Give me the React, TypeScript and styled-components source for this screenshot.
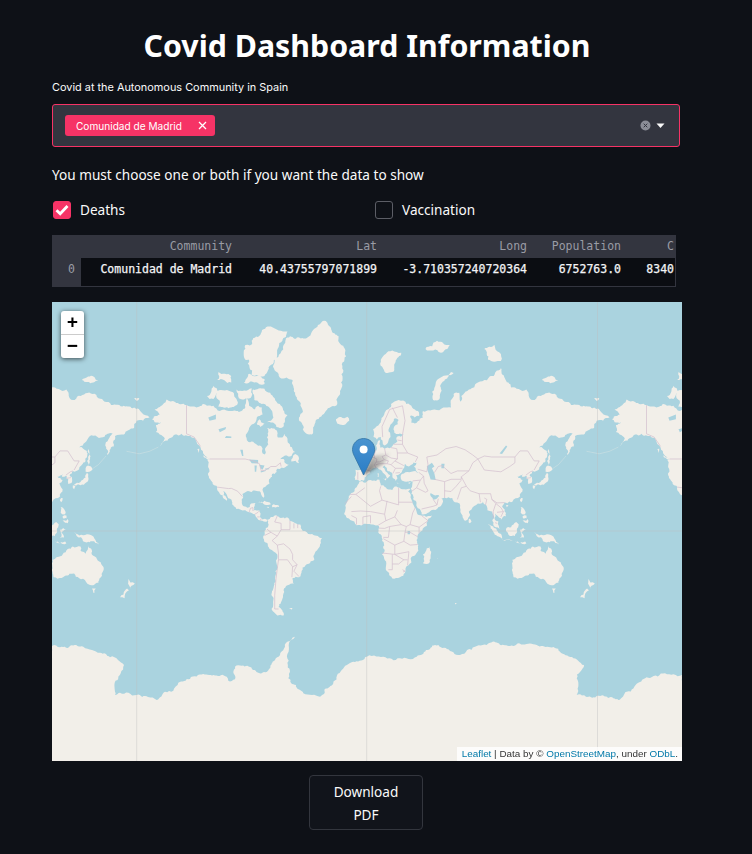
import React from "react";
import styled, { createGlobalStyle } from "styled-components";

const GlobalStyle = createGlobalStyle`
  html, body {
    margin: 0;
    padding: 0;
    background: #0e1117;
  }
  * {
    box-sizing: border-box;
  }
`;

/* ---- map data, lon/lat. web mercator at 460px per world ---- */
type Pts = number[][];

const project = ([lon, lat]: number[]) => [
  366.7 + (lon * 460) / 360,
  531 - 73.2 * Math.log(Math.tan(Math.PI / 4 + (lat * Math.PI) / 360)),
];

const toPath = (pts: number[][], closed = true) =>
  "M" + pts.map((p) => `${p[0].toFixed(1)} ${p[1].toFixed(1)}`).join("L") + (closed ? "Z" : "");

// coastlines are hand-typed and too straight, so break up long edges a bit
let seed = 7;
const noise = () => {
  seed = (seed * 16807) % 2147483647;
  return seed / 2147483647 - 0.5;
};
const roughEdge = (a: number[], b: number[], out: number[][]) => {
  const dx = b[0] - a[0];
  const dy = b[1] - a[1];
  const len = Math.hypot(dx, dy);
  if (len < 2.5) {
    out.push(b);
    return;
  }
  const amp = Math.min(len * 0.22, 1.8) * noise() * 2;
  const mid = [(a[0] + b[0]) / 2 - (dy / len) * amp, (a[1] + b[1]) / 2 + (dx / len) * amp];
  roughEdge(a, mid, out);
  roughEdge(mid, b, out);
};
const roughen = (pts: number[][]) => {
  const out: number[][] = [pts[0]];
  pts.forEach((p, i) => roughEdge(p, pts[(i + 1) % pts.length], out));
  return out;
};

const land: Pts[] = [
  // north america
  [[-168,65.5],[-164,66.5],[-162,67],[-166,68.5],[-163,69],[-156.5,71.2],[-150,70.5],[-141,69.7],[-135,69.3],[-128,70],[-125,69.5],[-120,69.5],[-115,68],[-108,68],[-102,68],[-98,68],[-95,69],[-94,71.5],[-92,69.5],[-88,68.5],[-85,69.5],[-82,69],[-81.5,67],[-86,66],[-87,64.5],[-92,62.5],[-94.5,60],[-94,58.7],[-92.5,57],[-88,56.5],[-85,55.3],[-82.3,55],[-82,52.9],[-80,51.3],[-79,52],[-79,54.5],[-77,56],[-78,58.8],[-77.5,60.5],[-78,62.4],[-73.5,62.3],[-70,61],[-69.5,58.8],[-66,58.8],[-64.5,60.3],[-62,57.5],[-60,55],[-56,52.5],[-60,50.2],[-65,50.2],[-69,48.3],[-65,49],[-64.5,47.5],[-61,46],[-64,44.5],[-66.5,44.5],[-70,43.7],[-70.5,41.8],[-74,40.6],[-75.5,38],[-76,35],[-78,33.9],[-81,32],[-80.2,27],[-80.5,25.2],[-81.8,26],[-83,29],[-85,29.7],[-89,30.2],[-90,29.1],[-94,29.6],[-97.3,27.8],[-97.7,22.5],[-95.5,18.8],[-91.5,18.5],[-90.5,21],[-87,21.5],[-88,17],[-88.5,15.8],[-84,15.8],[-83.5,11],[-81.5,9],[-79.5,9.5],[-77.5,8.7],[-78,7.5],[-80.5,7.3],[-83,8.3],[-85.7,10],[-87.5,13],[-92,14.5],[-95,16],[-99,16.6],[-104,19],[-105.5,20.5],[-105.5,22.5],[-109,26],[-112.5,30],[-114.7,31.7],[-112,27],[-109.5,23],[-112,24.7],[-115,28],[-117,32.5],[-120.5,34.5],[-122.5,37.5],[-124.2,41],[-124,46],[-124.7,48.4],[-123,49],[-127,51],[-130,54.5],[-134,58],[-138,59.5],[-145,60.3],[-150,60],[-152,59],[-156,57.5],[-162,55],[-158,58.5],[-162,60],[-165,61],[-165,63.5],[-161,64.5],[-166,64.5]],
  // greenland and the arctic islands
  [[-73,78.2],[-68,76],[-58,75.5],[-54,71],[-51,69],[-53,66],[-50,62],[-45,60],[-43,60],[-40,65],[-32,68],[-23,70],[-22,72],[-20,75],[-19,78],[-17,80],[-22,82],[-32,83.5],[-45,82],[-60,82],[-65,81],[-72,79]],
  [[-80,73.7],[-72,71.5],[-68,70],[-62,66.8],[-65,63],[-68,62.5],[-72,64],[-78,64.5],[-73,66],[-74,68],[-80,70],[-88,71],[-89,73.5]],
  [[-117,73],[-105,73],[-101,70],[-108,68.8],[-116,69.2]],
  [[-125,72],[-120,74.3],[-116,73],[-120,71.3]],
  [[-90,76.5],[-80,76.3],[-76,78],[-66,81.5],[-62,82.5],[-75,83],[-90,81.5],[-92,79]],
  [[-96,75],[-80,74.7],[-80,75.7],[-92,76.7]],
  [[-117,75.5],[-106,75],[-106,76.3],[-116,77]],
  [[-102,73.5],[-90,73.8],[-90,72],[-100,71.5]],
  [[-95,79],[-87,79.5],[-88,81],[-95,81]],
  [[-84,65.5],[-80,64],[-83,62.8],[-86,64]],
  [[-59,47.7],[-53,46.8],[-53,49],[-56,51.5],[-58,49.5]],
  [[-85,22],[-80,23],[-75,20.5],[-77.5,19.9],[-82,22.3]],
  [[-74,19.8],[-69,19.8],[-68.5,18.4],[-74,18.2]],
  [[-78.3,18.4],[-76.3,18.2],[-77,17.8]],
  [[-132.5,53.8],[-131,54],[-131.5,52]],
  [[-128,50.8],[-124,49.2],[-123.5,48.4],[-126,49.5]],
  // europe islands
  [[-24,65.5],[-20,66.2],[-15,66.3],[-13.7,65],[-18,63.5],[-22,63.9]],
  [[-5.5,50],[1.5,51.2],[1.5,52.8],[-1.5,55],[-2,57.5],[-5,58.6],[-6,56],[-3,54],[-5,52]],
  [[-10,52],[-6,52.2],[-5.8,54.8],[-8.5,55.2],[-10,54]],
  [[11,79],[20,80.3],[27,80],[20,77],[15,76.8]],
  [[52,71],[56,71],[58,74],[68,76.8],[66,77],[55,75.5],[51.5,72]],
  [[46,80.5],[55,81.5],[65,81],[58,80]],
  [[95,79],[105,78.8],[100,81],[92,80.5]],
  [[137,75.5],[146,75],[150,75.5],[142,76.2]],
  [[178,71.5],[182,71.5],[180,70.8]],
  [[12.5,38],[15.5,38.2],[15,36.7]],
  [[8.3,41],[9.7,41],[9.5,39],[8.5,39]],
  [[23.5,35.5],[26,35.2],[24,34.9]],
  [[32.3,35.1],[34.5,35.6],[33.5,34.6]],
  // eurasia
  [[-9,37],[-9.5,38.7],[-8.8,43.2],[-2,43.4],[-1.2,46],[-4.7,48.4],[-1.5,48.7],[1.5,50.5],[4,52],[8,53.8],[8.5,57],[10.5,57.7],[10.5,54.5],[14,54],[19,54.5],[21,56],[24,57.2],[24,59.3],[29,60],[25,60.2],[21.5,60.8],[21.5,63],[25,65.2],[22,65.8],[17.5,62.5],[18.5,60],[16.5,56.5],[14,55.5],[12.7,56],[11,59],[8,58],[5.3,59],[5,62],[10,64],[14,67.5],[19,70],[25,71],[31,70],[40,68],[41,66.5],[34,66.5],[35,64.3],[40,64.8],[44,66],[44,68],[53,68.5],[60,69],[66,69],[68,72.5],[72.5,72.8],[73,68],[74,72],[80,73.5],[87,75],[100,76.5],[105,77.7],[113,74],[125,73.5],[130,71],[140,72.7],[150,71.5],[160,69.7],[170,69.5],[178,69],[184,67.5],[190,66],[185,65],[180,65],[178,62.5],[170,60],[163,59.5],[163,58],[162,55],[157,51],[155.5,56],[162,61],[155,59.3],[143,59.3],[135,54.7],[141,53],[140,48],[135,43.5],[130,42.5],[127.5,40],[129.5,37],[129,35.2],[126.5,34.5],[126.5,37.5],[125,38],[125,39.7],[121.5,39],[122,40.7],[118,39],[122,37],[119.5,35],[122,31],[120,26],[114,22.3],[110,21],[108,21.7],[106,19],[109,14],[109,11.5],[105,8.7],[105,10],[100.5,13.5],[100,10],[103.5,4],[104,1.5],[101,3],[98.3,8],[98,15],[94.5,16],[94,19],[91,22.5],[87,21],[82,16.5],[80,15],[80,11],[77.5,8],[75,12],[73,18],[72.7,21],[69,22],[67,25],[61,25.2],[57,25.5],[56.5,27],[51,28],[48.5,30],[50,26.5],[51.5,25],[52,24],[56,26],[59.8,22.5],[55,17],[45,13],[43,13],[39,21],[35,28],[34.5,31.5],[36,36],[32,36],[27.5,36.7],[26.5,39.5],[29,41],[35,42],[41,41.5],[37,45],[39,47],[35,46],[33,45],[30,46.5],[28,43],[26,40.8],[23,40],[24,38],[22.8,36.5],[21,38],[19.5,41.5],[14,45.5],[12.5,44.5],[16,41.5],[18.5,40],[16,38],[12.5,41.5],[8.5,44.3],[3.5,43.2],[0,39.8],[-2,36.8],[-5.5,36]],
  // africa
  [[-5.8,35.8],[-1,35.3],[10,37.2],[11,33.5],[15,32.3],[20,30.5],[22,32.8],[32,31.3],[34.3,31.2],[32.5,29.5],[35,24],[37.5,18],[43,12],[51,12],[47,4],[40,-3],[39,-7],[40.5,-15],[35,-20],[35,-24],[32.5,-26],[30,-31],[26,-34],[20,-34.8],[18,-33],[15,-27],[12,-18],[13.5,-10],[9,-1],[9.5,4],[5,5],[-3,5],[-8,4.5],[-13,8.5],[-17,14.7],[-16,21],[-13,27.5],[-9.5,31],[-7,34]],
  [[49.5,-12],[50.5,-16],[47,-25],[44,-24.5],[44,-18],[46,-16]],
  // south america
  [[-77.5,8.7],[-72,12],[-70,11.7],[-62,10.5],[-52,5],[-50,0],[-44,-2.5],[-35,-5.5],[-39,-15],[-41,-22],[-48,-26],[-53,-34],[-58,-34.5],[-57,-38],[-62,-39],[-65,-42],[-65.5,-46],[-69,-51],[-65,-55],[-70,-55],[-74.5,-52],[-73.5,-42],[-71.5,-30],[-70,-18],[-76,-14],[-81,-5.5],[-80,0],[-77,4]],
  [[-61,-51.5],[-58,-51.5],[-59,-52.3]],
  // oceania
  [[114,-22],[122,-18],[126,-14],[130,-12],[136,-12],[136,-15],[140,-17.5],[142,-11],[146,-19],[153,-26],[153,-31],[150,-37.5],[146,-39],[143,-38.7],[138,-35],[135,-34.7],[131,-31.5],[124,-33],[118,-35],[115,-34],[114,-27]],
  [[145,-41],[148,-41],[147,-43.5],[146,-43.5]],
  [[173,-35],[178.5,-38],[175,-41.5],[174,-39]],
  [[172.5,-41],[174,-42],[170.5,-46.5],[167,-46],[171,-42]],
  // east asia islands
  [[130.9,34],[136,35.7],[140,38.5],[141,41.5],[142,39],[140.5,35.5],[136,33.7],[132,33.5]],
  [[130,33.5],[132,33],[131,31],[130,32]],
  [[140,42],[141.8,45.5],[145.5,43.5],[143,42]],
  [[142,54],[143.5,49],[142.5,46],[142,50]],
  [[121,25],[122,25],[121,22],[120,23]],
  [[120.5,18.5],[122,18],[124,13],[120.5,14]],
  [[122,8],[126,9.5],[126,6],[124,6.5]],
  [[122,11.5],[125,12],[125,10],[123,9.5]],
  [[109,1.5],[113,3],[117,7],[119,5],[117.5,1],[116,-3.8],[111,-3],[109,0]],
  [[95,5.5],[98,4],[104,-2],[106,-6],[102,-4],[97,2]],
  [[105.5,-6.5],[111,-6.5],[114.5,-8],[108,-7.7]],
  [[120,1],[125,1.5],[121,-1],[123,-5],[120,-5.5]],
  [[131,-1],[135,-3.5],[141,-2.5],[147,-6],[150.5,-10.5],[145,-8],[141,-9],[138,-8],[133,-4]],
  [[116,-8.3],[124,-8.3],[125,-9.5],[119,-9.5]],
  [[80,9.7],[82,7.5],[80.5,6],[79.8,8]],
  [[109,20],[111,19.5],[109.5,18.2]],
  [[55.3,-20.9],[55.8,-21],[55.5,-21.4]],
  [[69,-49],[70.5,-49],[69.5,-49.8]],
];

const lakes: Pts[] = [
  [[47,45],[51,47],[53,45],[51,44],[53,41],[54,37],[50,37.3],[49,40],[47.5,43]],
  [[58.5,46.5],[61,46.5],[60.5,44],[58.5,44]],
  [[104,51.7],[109,55.5],[110,55],[106,51.5]],
  [[32,0],[34,0],[34,-2.5],[32,-2.5]],
  [[-92,48.8],[-85,48.5],[-85,46.7],[-90,46.8]],
  [[-87.8,45.5],[-86,45.5],[-86.5,42],[-87.6,42]],
  [[-84,46],[-80,45.5],[-81.5,43.2],[-83,44]],
  [[-83,42.3],[-79,42.9],[-79,42.5],[-82.8,41.6]],
  [[-79.5,43.8],[-76.3,44],[-76.3,43.4],[-79.5,43.3]],
  [[-116,62],[-110,62.8],[-110.5,62],[-115,60.9]],
  [[-124,66],[-118,67],[-118,65.5],[-123,65]],
  [[-99,53.5],[-97,53.5],[-96.5,50.5],[-97.5,50.5]],
  [[-110,59.5],[-106,59.3],[-106,58.7],[-111,58.6]],
];

// thin island chains, drawn as a faint stroke
const chains: Pts[] = [
  [[-163,54.8],[-170,52.8],[-178,51.6],[-188,52.8]],
  [[156,50.5],[150,46],[145.5,43.8]],
];

const borders: Pts[] = [
  [[-123,49],[-95,49],[-89,48],[-84,46.5],[-82.5,42.5],[-79,43],[-75,45],[-71,45],[-67.5,47],[-67,45]],
  [[-141,69.7],[-141,60.3],[-135,59],[-130,55]],
  [[-117,32.5],[-108,31.5],[-106,31.7],[-101,29.7],[-97.3,26]],
  [[-92,14.5],[-91,17.5],[-89,18]],
  [[-89,18],[-89,15.5]],[[-87.5,13],[-85,14.5],[-84,15.5]],[[-85.7,11],[-83.7,11]],[[-83,8.3],[-82.7,9.6]],
  [[-70,11.7],[-72,7],[-67,6],[-67,1],[-70,-4],[-74,-7.5],[-70,-11],[-69,-17],[-69,-22],[-70,-28],[-71,-35],[-72,-45],[-72,-52],[-69,-52]],
  [[-67,1],[-60,1],[-60,5]],
  [[-70,-11],[-65,-10],[-60,-14],[-58,-18],[-58,-22],[-54.5,-25.5],[-57,-30],[-53,-33.5]],
  [[-69,-22],[-62,-22],[-58,-27],[-54.5,-25.5]],[[-58,-27],[-58.5,-34]],
  [[-80,-3.5],[-75,-1],[-70,-4]],[[-78,1.5],[-75,-1]],[[-60,8],[-60,5]],[[-57,6],[-57,2]],[[-54,5.5],[-54,2.3]],
  [[-1.8,43.3],[3,42.5]],[[-7,37.2],[-7,42]],
  [[2.5,51],[6,49.5],[8,49],[7.5,47.5],[6,46],[7.5,43.8]],
  [[7,53.5],[6,51],[6,49.5]],
  [[14,54],[15,51],[12,50.2],[13.7,48.7],[10,47.5],[7.5,47.5]],
  [[7,46],[10,46.5],[13.7,46.5],[16,46.5],[17,48],[13.7,48.7]],
  [[15,51],[19,49.5],[24,49],[24,52],[23.5,54],[19,54.5]],
  [[21,56],[28,56]],[[24,57.8],[27.5,57.5]],[[24,52],[32,52]],
  [[22,48],[29,45.5]],[[22.5,44],[28,44]],[[24,49],[22,48],[19,46]],
  [[16,46.5],[19,46],[22.5,44],[20.5,41]],[[22.5,41.3],[26,41.5]],
  [[12.5,59],[12,63],[18,68.5],[28,69.5]],[[24,66],[20,69]],
  [[28,69.5],[30,65],[28,60],[28,56],[32,52],[40,50],[38,47.5]],
  [[47,42],[48,46],[47,50],[55,51],[62,54],[70,55],[77,53.5],[83,51],[87,49],[92,50.5],[98,50],[106,50],[116,50],[120,53],[126,53],[131,48],[135,48],[131,43]],
  [[40,43.5],[47,42]],
  [[53,41.5],[56,45],[59,45.5],[66,41],[71,42.5],[80,42.5],[83,47],[87,49]],
  [[74,39],[80,42.5]],[[74,39],[78,33],[81,30],[88,28],[97,28],[98,24],[102,21.5],[108,21.7]],
  [[87,49],[92,43],[105,42],[112,45],[116,47],[116,50]],
  [[53,37.5],[61,36],[66,37.5],[74,37.5],[74,39]],
  [[61,30],[66,29.5],[70,33],[74,37]],
  [[44.5,39.5],[45,35],[48,30]],[[61,36],[61,25]],
  [[71,24],[74,32],[78,33]],[[88,28],[89,22]],[[92,25],[94,24],[93,20]],
  [[98,24],[101,21],[99,15],[99,10]],[[101,21],[105,18],[107,15],[105,11]],[[102,14.5],[107,15]],
  [[124.5,40],[128,42],[130,42.5]],[[125,38],[128.5,38.5]],[[100.5,6.5],[102,6]],
  [[36,36.5],[42,37],[44.5,39.5],[41,41.5]],
  [[35,29.5],[39,32],[42,37]],[[39,32],[46,29],[48,30]],
  [[52,24],[55,20],[52,19],[43,17]],[[55,20],[56,24.5]],
  [[-8.5,27.5],[-13,27.5]],[[-1.5,32],[-8.5,27.5],[-5,25],[3,19],[12,23.5],[10,30],[11,33]],
  [[12,23.5],[25,20],[25,32]],[[25,22],[36,22]],
  [[24,16],[22,11],[27,5],[31,3.5],[34,5],[36,14],[38,18]],
  [[-17,21],[-12,26]],[[-12,15],[-5,15.5],[3,15],[14,13],[16,23]],
  [[14,13],[15,8],[9,4.5]],[[3,12],[3,6]],[[15,8],[22,11]],
  [[-8,5],[-8,10],[-12,12]],[[-3,5],[-3,11],[3,12]],
  [[34,5],[41,3],[48,8],[43,12]],[[41,3],[41,-2]],
  [[31,3.5],[30,-1],[34,-1],[40,-4.5]],
  [[30,-1],[29,-8],[22,-11],[13,-6]],[[29,-8],[34,-11],[40,-10.5]],
  [[22,-11],[22,-18],[12,-17]],[[22,-18],[33,-16],[32,-26]],
  [[20,-18],[20,-29],[17,-29]],[[22,-18],[29,-22],[32,-22]],
  [[20,-25],[25,-25],[29,-22]],[[9.5,2.3],[14,2],[18,3.5],[27,5]],[[18,3.5],[17,-5],[13,-5]],
  [[28,-29],[30,-30],[28.5,-30.5]],
];

// ragged line of Antarctica, page pixels traced from the picture
const antarctica: number[][] = [
  [52,646],[60,647.3],[71.7,645.3],[83.3,646.7],[92,650],[100,652.7],[110,657.3],[118,660],[124,665],[120.7,673.3],[115,681.7],[115,695],[120,692.7],[136.7,695],[148,697],[156.7,700],[165,691.7],[173.3,690.7],[178.3,682.7],[190,679],[203.3,674],[215,675.5],[226.7,676.7],[228.3,680.7],[235,679.3],[235,666.7],[241.7,665.7],[252,669],[261.7,673.3],[270,668.3],[275,660],[280,655],[287.3,641.7],[295,636.7],[289,643],[288.3,678.3],[296,685],[303.3,693.3],[312,695],[320,696.7],[333.3,681.7],[341.7,670],[353.3,661.7],[365,657.3],[383.3,656.7],[400,658.3],[416.7,656.7],[426,650],[435,645],[447,649],[460,655],[475,646.7],[490,642.7],[510,646],[523,644.5],[536.7,645],[560,651.7],[572,657],[584,665],[580,672],[576.7,678.3],[576.7,695],[597.3,695.7],[608,698],[618.3,700],[626.7,691.7],[638.3,682.7],[650,678],[665,673.3],[682,675],[690,770],[40,770],
];

const landPath = land.map((p) => toPath(roughen(p.map(project)))).join("");
const lakePath = lakes.map((p) => toPath(p.map(project))).join("");
const chainPath = chains.map((p) => toPath(p.map(project), false)).join("");
const borderPath = borders.map((p) => toPath(p.map(project), false)).join("");
const antarcticaPath = toPath(roughen(antarctica));

const GRID_X = [136.7, 366.7, 597.5];

const Page = styled.div`
  width: 752px;
  height: 854px;
  padding: 0 70px 0 52px;
  background: #0e1117;
  color: #fafafa;
  font-family: "Noto Sans", sans-serif;
  overflow: hidden;
`;

const Title = styled.h1`
  margin: 0;
  padding-top: 26px;
  height: 80px;
  font-family: "Noto Sans", sans-serif;
  font-size: 30.3px;
  line-height: 40px;
  font-weight: 700;
  text-align: center;
  color: #fff;
`;

const FieldLabel = styled.div`
  height: 24px;
  font-family: Inter, sans-serif;
  font-size: 10.9px;
  line-height: 14px;
`;

const SelectBox = styled.div`
  width: 628px;
  height: 43px;
  display: flex;
  align-items: center;
  justify-content: space-between;
  padding: 0 14px 0 12px;
  background: #33353f;
  border: 1px solid #f63366;
  border-radius: 3px;
`;

const Tag = styled.div`
  width: 150px;
  height: 21px;
  display: flex;
  align-items: center;
  justify-content: space-between;
  padding: 0 8px 0 11px;
  background: #f63366;
  border-radius: 3px;
  color: #fff;
  font-family: Inter, sans-serif;
  font-size: 10.1px;
`;

const SelectIcons = styled.div`
  display: flex;
  align-items: center;
  gap: 5px;
`;

const Hint = styled.p`
  margin: 0;
  padding-top: 18px;
  height: 50px;
  font-size: 13.6px;
  line-height: 19px;
`;

const CheckRow = styled.div`
  display: grid;
  grid-template-columns: 323px 1fr;
  height: 38px;
  padding-top: 4px;
`;

const CheckItem = styled.label`
  display: flex;
  align-items: center;
  gap: 9px;
  height: 18px;
  margin-left: ${(p: { $offset?: number }) => p.$offset ?? 0}px;
  font-size: 13.6px;
  line-height: 16px;
`;

const CheckBox = styled.span<{ $checked?: boolean }>`
  width: 18px;
  height: 18px;
  display: flex;
  align-items: center;
  justify-content: center;
  border-radius: 3px;
  background: ${(p) => (p.$checked ? "#f63366" : "transparent")};
  border: 1px solid ${(p) => (p.$checked ? "#f63366" : "#5c5e66")};
`;

const TableWrap = styled.div`
  width: 624px;
  height: 52px;
  border-right: 1px solid #33353f;
  border-bottom: 1px solid #33353f;
  overflow: hidden;
  font-family: "DejaVu Sans Mono", monospace;
  font-size: 11.5px;
`;

const TableRow = styled.div<{ $head?: boolean }>`
  display: grid;
  grid-template-columns: 29px 159px 145px 150px 94px 46px;
  height: ${(p) => (p.$head ? "23px" : "28px")};
  line-height: 23px;
  background: ${(p) => (p.$head ? "#33353f" : "#0b0d12")};
  color: ${(p) => (p.$head ? "#9a9ca5" : "#f4f4f6")};
  -webkit-text-stroke: ${(p) => (p.$head ? "0" : "0.25px")};
`;

const Cell = styled.div<{ $last?: boolean }>`
  text-align: right;
  padding-right: ${(p) => (p.$last ? "1px" : "8px")};
  white-space: nowrap;
`;

const IndexCell = styled.div`
  text-align: right;
  padding-right: 6px;
  background: #33353f;
  color: #9a9ca5;
  -webkit-text-stroke: 0;
`;

const MapFrame = styled.div`
  position: relative;
  width: 630px;
  height: 459px;
  margin-top: 15px;
  overflow: hidden;
  background: #aad3df;
`;

const MapSvg = styled.svg`
  display: block;
  width: 630px;
  height: 459px;
`;

const ZoomControl = styled.div`
  position: absolute;
  left: 9px;
  top: 9px;
  width: 23px;
  height: 47px;
  display: flex;
  flex-direction: column;
  background: #fff;
  border-radius: 3px;
  box-shadow: 0 1px 5px rgba(0, 0, 0, 0.65);
`;

const ZoomButton = styled.div<{ $top?: boolean }>`
  flex: 1;
  display: flex;
  align-items: center;
  justify-content: center;
  color: #000;
  font-family: "Liberation Mono", monospace;
  font-size: 19px;
  font-weight: 700;
  border-bottom: ${(p) => (p.$top ? "1px solid #ccc" : "none")};
`;

const Pin = styled.svg`
  position: absolute;
  left: 300px;
  top: 136px;
  width: 50px;
  height: 40px;
  overflow: visible;
`;

const Attribution = styled.div`
  position: absolute;
  right: 0;
  bottom: 0;
  height: 14px;
  padding: 0 4px 0 5px;
  background: rgba(255, 255, 255, 0.8);
  color: #333;
  font-family: "Liberation Sans", sans-serif;
  font-size: 9.9px;
  line-height: 14px;
  white-space: nowrap;
`;

const MapLink = styled.a`
  color: #0078a8;
  text-decoration: none;
`;

const Footer = styled.div`
  display: flex;
  justify-content: center;
  padding: 14px 2px 0 0;
`;

const DownloadButton = styled.button`
  width: 114px;
  height: 55px;
  padding: 1px 20px 0;
  background: #11141b;
  border: 1px solid #33363e;
  border-radius: 4px;
  color: #fafafa;
  font-family: "Noto Sans", sans-serif;
  font-size: 13.6px;
  line-height: 23px;
`;

const WorldMap = () => (
  <MapSvg viewBox="52 302 630 459">
    <defs>
      <filter id="soft" x="-2%" y="-2%" width="104%" height="104%">
        <feGaussianBlur stdDeviation="0.3" />
      </filter>
      <g id="world">
        <path d={landPath} fill="#f2efe9" />
        <path d={lakePath} fill="#aad3df" />
        <path d={chainPath} fill="none" stroke="#f2efe9" strokeWidth="0.5" strokeOpacity="0.6" />
        <path d={borderPath} fill="none" stroke="#d3bfcf" strokeWidth="0.7" />
      </g>
    </defs>
    <g filter="url(#soft)">
      <use href="#world" x="-460" />
      <use href="#world" />
      <use href="#world" x="460" />
      <path d={antarcticaPath} fill="#f2efe9" />
    </g>
    {GRID_X.map((x) => (
      <line key={x} x1={x} x2={x} y1="302" y2="761" stroke="#bdbdbd" strokeOpacity="0.4" />
    ))}
    <line x1="52" x2="682" y1="531" y2="531" stroke="#bdbdbd" strokeOpacity="0.4" />
  </MapSvg>
);

const Marker = () => (
  <Pin viewBox="0 0 50 40">
    <defs>
      <linearGradient id="pinFill" x1="0" y1="0" x2="0" y2="1">
        <stop offset="0" stopColor="#4a94d0" />
        <stop offset="1" stopColor="#2a7dc6" />
      </linearGradient>
      <linearGradient id="shade" x1="0" y1="1" x2="1" y2="0">
        <stop offset="0" stopColor="#333" stopOpacity="0.75" />
        <stop offset="1" stopColor="#666" stopOpacity="0.05" />
      </linearGradient>
      <filter id="pinBlur" x="-30%" y="-30%" width="160%" height="160%">
        <feGaussianBlur stdDeviation="1.6" />
      </filter>
    </defs>
    <path d="M12 37L20 18L38 15L32 26Z" fill="url(#shade)" filter="url(#pinBlur)" />
    <path
      d="M11.6.5C5.4.5.5 5.4.5 11.5c0 2.400.9 4.800 2.100 7L11.600 37l9-18.500c1.200-2.200 2.100-4.600 2.100-7C22.700 5.400 17.800.5 11.600.5Z"
      fill="url(#pinFill)"
      stroke="#3274a3"
      strokeWidth="0.8"
    />
    <circle cx="11.600" cy="11.500" r="4" fill="#fff" />
  </Pin>
);

export default function App() {
  return (
    <Page>
      <GlobalStyle />
      <Title>Covid Dashboard Information</Title>
      <FieldLabel>Covid at the Autonomous Community in Spain</FieldLabel>
      <SelectBox>
        <Tag>
          Comunidad de Madrid
          <svg width="9" height="9" viewBox="0 0 9 9">
            <path d="M1 1l7 7M8 1L1 8" stroke="#fff" strokeWidth="1.300" />
          </svg>
        </Tag>
        <SelectIcons>
          <svg width="11" height="11" viewBox="0 0 11 11">
            <circle cx="5.500" cy="5.500" r="5" fill="#8b8d97" />
            <path d="M3.700 3.700l3.600 3.600M7.300 3.700l-3.600 3.600" stroke="#33353f" strokeWidth="1" />
          </svg>
          <svg width="9" height="6" viewBox="0 0 9 6">
            <path d="M.5.500h8L4.500 5Z" fill="#fafafa" />
          </svg>
        </SelectIcons>
      </SelectBox>
      <Hint>You must choose one or both if you want the data to show</Hint>
      <CheckRow>
        <CheckItem $offset={1}>
          <CheckBox $checked>
            <svg width="14" height="12" viewBox="0 0 14 12">
              <path d="M1.500 6.200L5.200 9.800L12.500 2" fill="none" stroke="#fff" strokeWidth="2.800" />
            </svg>
          </CheckBox>
          Deaths
        </CheckItem>
        <CheckItem>
          <CheckBox />
          Vaccination
        </CheckItem>
      </CheckRow>
      <TableWrap>
        <TableRow $head>
          <IndexCell />
          <Cell>Community</Cell>
          <Cell>Lat</Cell>
          <Cell>Long</Cell>
          <Cell>Population</Cell>
          <Cell $last>C</Cell>
        </TableRow>
        <TableRow>
          <IndexCell>0</IndexCell>
          <Cell>Comunidad de Madrid</Cell>
          <Cell>40.43755797071899</Cell>
          <Cell>-3.710357240720364</Cell>
          <Cell>6752763.0</Cell>
          <Cell $last>8340</Cell>
        </TableRow>
      </TableWrap>
      <MapFrame>
        <WorldMap />
        <Marker />
        <ZoomControl>
          <ZoomButton $top>+</ZoomButton>
          <ZoomButton>−</ZoomButton>
        </ZoomControl>
        <Attribution>
          <MapLink>Leaflet</MapLink> | Data by © <MapLink>OpenStreetMap</MapLink>, under <MapLink>ODbL</MapLink>.
        </Attribution>
      </MapFrame>
      <Footer>
        <DownloadButton>Download PDF</DownloadButton>
      </Footer>
    </Page>
  );
}
